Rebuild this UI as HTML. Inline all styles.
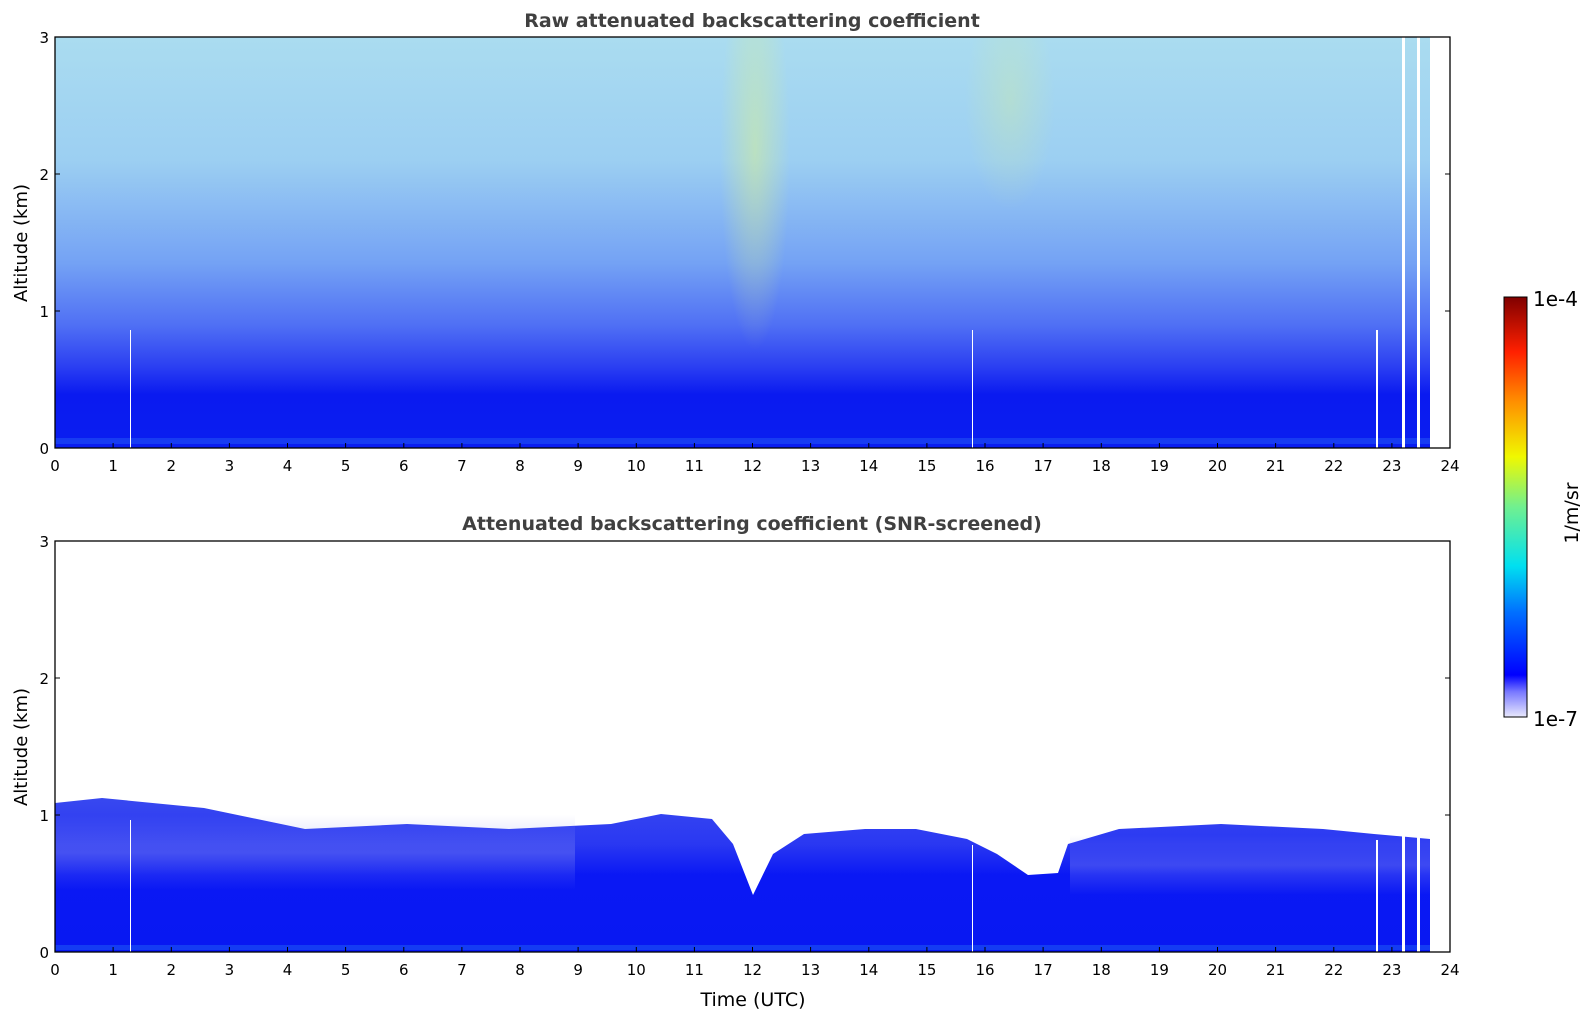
<!DOCTYPE html><html><head><style>body{margin:0;background:#fff}svg{display:block}text{font-family:"DejaVu Sans","Liberation Sans",sans-serif;fill:#000}</style></head><body>
<svg width="1595" height="1020" viewBox="0 0 1595 1020" xmlns="http://www.w3.org/2000/svg">
<defs>
<linearGradient id="g1" x1="0" y1="0" x2="0" y2="1">
<stop offset="0" stop-color="#aadcf0"/><stop offset="0.3" stop-color="#9ccff2"/><stop offset="0.55" stop-color="#74a2f4"/><stop offset="0.7" stop-color="#5070f4"/><stop offset="0.8" stop-color="#2c40f2"/><stop offset="0.87" stop-color="#0a1af0"/><stop offset="1" stop-color="#0a1ef0"/></linearGradient>
<linearGradient id="g2" x1="0" y1="0" x2="0" y2="1">
<stop offset="0" stop-color="#3848f0"/><stop offset="0.3" stop-color="#2a38f2"/><stop offset="0.5" stop-color="#0a18f4"/><stop offset="1" stop-color="#0818f2"/></linearGradient>
<linearGradient id="lav" x1="0" y1="0" x2="0" y2="1"><stop offset="0" stop-color="#8890f0" stop-opacity="0"/><stop offset="0.5" stop-color="#8890f0" stop-opacity="0.35"/><stop offset="1" stop-color="#8890f0" stop-opacity="0"/></linearGradient>
<linearGradient id="cb" x1="0" y1="1" x2="0" y2="0">
<stop offset="0" stop-color="#e8e8fc"/><stop offset="0.06" stop-color="#7878ff"/><stop offset="0.1" stop-color="#0000ff"/><stop offset="0.25" stop-color="#0070ff"/><stop offset="0.36" stop-color="#00e0f0"/><stop offset="0.5" stop-color="#70f090"/><stop offset="0.62" stop-color="#f0f800"/><stop offset="0.75" stop-color="#ff9000"/><stop offset="0.87" stop-color="#ff2000"/><stop offset="1" stop-color="#800000"/></linearGradient>
<radialGradient id="yl"><stop offset="0" stop-color="#d8f090" stop-opacity="0.5"/><stop offset="1" stop-color="#d8f090" stop-opacity="0"/></radialGradient>
<clipPath id="c1"><rect x="55" y="37" width="1375" height="411"/></clipPath>
</defs>
<text x="752" y="27" font-size="19" font-weight="bold" text-anchor="middle" style="fill:#404040">Raw attenuated backscattering coefficient</text>
<rect x="55" y="37" width="1375" height="411" fill="url(#g1)"/>
<g clip-path="url(#c1)">
<ellipse cx="755" cy="150" rx="35" ry="200" fill="url(#yl)"/>
<ellipse cx="1010" cy="100" rx="45" ry="110" fill="url(#yl)" opacity="0.6"/>
</g>
<rect x="55" y="438" width="1375" height="6" fill="#2050f4" opacity="0.6"/>
<rect x="130" y="330" width="1" height="118" fill="#fff"/><rect x="972" y="330" width="1" height="118" fill="#fff"/>
<rect x="1376" y="330" width="2" height="118" fill="#fff"/><rect x="1402" y="37" width="3" height="411" fill="#fff"/><rect x="1417" y="37" width="3" height="411" fill="#fff"/>
<rect x="1430" y="37" width="20" height="411" fill="#fff"/>
<rect x="55" y="37" width="1395" height="411" fill="none" stroke="#000" stroke-width="1.3"/>
<text x="752" y="530" font-size="19" font-weight="bold" text-anchor="middle" style="fill:#404040">Attenuated backscattering coefficient (SNR-screened)</text>
<polygon fill="url(#g2)" points="55,803 102,798 204,808 305,829 407,824 509,829 611,824 661,814 712,819 733,844 753,895 773,854 804,834 865,829 916,829 967,839 997,854 1028,875 1058,873 1068,844 1119,829 1221,824 1323,829 1374,834 1430,839 1430,952 55,952"/>
<rect x="55" y="815" width="520" height="75" fill="url(#lav)"/>
<rect x="1070" y="835" width="360" height="60" fill="url(#lav)"/>
<rect x="55" y="945" width="1375" height="5" fill="#2060f4" opacity="0.5"/>
<rect x="130" y="820" width="1" height="132" fill="#fff"/><rect x="972" y="845" width="1" height="107" fill="#fff"/>
<rect x="1376" y="840" width="2" height="112" fill="#fff"/><rect x="1402" y="835" width="3" height="117" fill="#fff"/><rect x="1417" y="835" width="3" height="117" fill="#fff"/>
<rect x="55" y="541" width="1395" height="411" fill="none" stroke="#000" stroke-width="1.3"/>
<g stroke="#000" stroke-width="1">
<path d="M55 448v-5M113.1 448v-5M171.3 448v-5M229.4 448v-5M287.5 448v-5M345.6 448v-5M403.8 448v-5M461.9 448v-5M520 448v-5M578.1 448v-5M636.3 448v-5M694.4 448v-5M752.5 448v-5M810.6 448v-5M868.8 448v-5M926.9 448v-5M985 448v-5M1043.1 448v-5M1101.3 448v-5M1159.4 448v-5M1217.5 448v-5M1275.6 448v-5M1333.8 448v-5M1391.9 448v-5M1450 448v-5"/>
<path d="M55 448v-5M113.1 448v-5M171.3 448v-5M229.4 448v-5M287.5 448v-5M345.6 448v-5M403.8 448v-5M461.9 448v-5M520 448v-5M578.1 448v-5M636.3 448v-5M694.4 448v-5M752.5 448v-5M810.6 448v-5M868.8 448v-5M926.9 448v-5M985 448v-5M1043.1 448v-5M1101.3 448v-5M1159.4 448v-5M1217.5 448v-5M1275.6 448v-5M1333.8 448v-5M1391.9 448v-5M1450 448v-5" transform="translate(0,504)"/>
<path d="M55 448h5M55 311h5M55 174h5M55 37h5M1450 448h-5M1450 311h-5M1450 174h-5M1450 37h-5"/>
<path d="M55 448h5M55 311h5M55 174h5M55 37h5M1450 448h-5M1450 311h-5M1450 174h-5M1450 37h-5" transform="translate(0,504)"/>
</g>
<g font-size="15" text-anchor="middle">
<g><text x="55" y="471">0</text><text x="113.1" y="471">1</text><text x="171.3" y="471">2</text><text x="229.4" y="471">3</text><text x="287.5" y="471">4</text><text x="345.6" y="471">5</text><text x="403.8" y="471">6</text><text x="461.9" y="471">7</text><text x="520" y="471">8</text><text x="578.1" y="471">9</text><text x="636.3" y="471">10</text><text x="694.4" y="471">11</text><text x="752.5" y="471">12</text><text x="810.6" y="471">13</text><text x="868.8" y="471">14</text><text x="926.9" y="471">15</text><text x="985" y="471">16</text><text x="1043.1" y="471">17</text><text x="1101.3" y="471">18</text><text x="1159.4" y="471">19</text><text x="1217.5" y="471">20</text><text x="1275.6" y="471">21</text><text x="1333.8" y="471">22</text><text x="1391.9" y="471">23</text><text x="1450" y="471">24</text></g>
<g transform="translate(0,504)"><text x="55" y="471">0</text><text x="113.1" y="471">1</text><text x="171.3" y="471">2</text><text x="229.4" y="471">3</text><text x="287.5" y="471">4</text><text x="345.6" y="471">5</text><text x="403.8" y="471">6</text><text x="461.9" y="471">7</text><text x="520" y="471">8</text><text x="578.1" y="471">9</text><text x="636.3" y="471">10</text><text x="694.4" y="471">11</text><text x="752.5" y="471">12</text><text x="810.6" y="471">13</text><text x="868.8" y="471">14</text><text x="926.9" y="471">15</text><text x="985" y="471">16</text><text x="1043.1" y="471">17</text><text x="1101.3" y="471">18</text><text x="1159.4" y="471">19</text><text x="1217.5" y="471">20</text><text x="1275.6" y="471">21</text><text x="1333.8" y="471">22</text><text x="1391.9" y="471">23</text><text x="1450" y="471">24</text></g>
</g>
<g font-size="15" text-anchor="end">
<text x="49" y="454">0</text><text x="49" y="317">1</text><text x="49" y="180">2</text><text x="49" y="43">3</text>
<text x="49" y="958">0</text><text x="49" y="821">1</text><text x="49" y="684">2</text><text x="49" y="547">3</text>
</g>
<text transform="translate(27,243) rotate(-90)" font-size="18" text-anchor="middle">Altitude (km)</text>
<text transform="translate(27,747) rotate(-90)" font-size="18" text-anchor="middle">Altitude (km)</text>
<text x="753" y="1006" font-size="19" text-anchor="middle">Time (UTC)</text>
<rect x="1504" y="297" width="23" height="420" fill="url(#cb)" stroke="#000" stroke-width="1"/>
<text x="1533" y="306" font-size="20">1e-4</text>
<text x="1533" y="726" font-size="20">1e-7</text>
<text transform="translate(1578,513) rotate(-90)" font-size="19" text-anchor="middle">1/m/sr</text>
</svg>
</body></html>
